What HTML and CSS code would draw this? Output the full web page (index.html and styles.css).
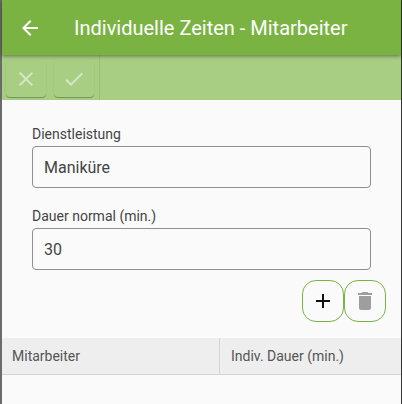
FILE: index.html
```html
<!DOCTYPE html>
<html lang="de">
  <head>
    <meta charset="UTF-8" />
    <title>Individuelle Zeiten - Mitarbeiter</title>
    <link rel="stylesheet" href="styles.css">
  </head>
  <body>
    <main class="screen">
      <header class="appbar">
        <svg class="backIcon" width="24" height="24" viewBox="0 0 24 24">
          <path d="M20 11H7.83l5.59-5.59L12 4l-8 8 8 8 1.41-1.41L7.83 13H20v-2z" />
        </svg>
        <h1>Individuelle Zeiten - Mitarbeiter</h1>
      </header>

      <div class="toolbar">
        <div class="toolGroup">
          <button class="toolButton">
            <svg width="24" height="24" viewBox="0 0 24 24">
              <path d="M19 6.41L17.59 5 12 10.59 6.41 5 5 6.41 10.59 12 5 17.59 6.41 19 12 13.41 17.59 19 19 17.59 13.41 12z" />
            </svg>
          </button>
          <button class="toolButton">
            <svg width="24" height="24" viewBox="0 0 24 24">
              <path d="M9 16.17L4.83 12l-1.42 1.41L9 19 21 7l-1.41-1.41z" />
            </svg>
          </button>
        </div>
      </div>

      <section class="content">
        <form class="form">
          <label class="field">
            <span>Dienstleistung</span>
            <input type="text" value="Maniküre" />
          </label>
          <label class="field">
            <span>Dauer normal (min.)</span>
            <input type="text" value="30" />
          </label>
        </form>

        <div class="actions">
          <button class="roundButton">
            <svg width="24" height="24" viewBox="0 0 24 24">
              <path d="M19 13h-6v6h-2v-6H5v-2h6V5h2v6h6v2z" />
            </svg>
          </button>
          <button class="roundButton disabled">
            <svg width="24" height="24" viewBox="0 0 24 24">
              <path d="M6 19c0 1.1.9 2 2 2h8c1.1 0 2-.9 2-2V7H6v12zM19 4h-3.5l-1-1h-5l-1 1H5v2h14V4z" />
            </svg>
          </button>
        </div>

        <div class="tableHead">
          <div class="cell first">Mitarbeiter</div>
          <div class="cell">Indiv. Dauer (min.)</div>
        </div>
      </section>
    </main>
  </body>
</html>
```

FILE: styles.css
```css
:root {
  --green: #7ab342;
  --lightGreen: #a8ce84;
  --page: #fafafa;
  --text: #444444;
  --line: #d4d4d4;
}
* {
  margin: 0;
  padding: 0;
  box-sizing: border-box;
  font-family: Roboto, "Liberation Sans", sans-serif;
}
html,
body {
  height: 100%;
  overflow: hidden;
}
.screen {
  height: 404px;
  display: flex;
  flex-direction: column;
  background-color: var(--page);
  border-left: 2px solid #6b6b6b;
  border-right: 1px solid #333333;
}

.appbar {
  height: 55px;
  display: flex;
  align-items: center;
  gap: 32px;
  padding-left: 16px;
  background-color: var(--green);
  box-shadow: 0 1px 4px rgba(0, 0, 0, 0.45);
  position: relative;
}
.appbar h1 {
  font-size: 20px;
  font-weight: 400;
  color: #ffffff;
}
.backIcon {
  fill: #ffffff;
}

.toolbar {
  height: 45px;
  display: flex;
  background-color: var(--lightGreen);
}
.toolGroup {
  display: flex;
  gap: 8px;
  padding: 6px 5px 0 4px;
  border-right: 1px solid #98bf75;
}
.toolButton {
  width: 40px;
  height: 36px;
  display: flex;
  align-items: center;
  justify-content: center;
  border: none;
  border-radius: 4px;
  background-color: #a8ce84;
  box-shadow: 0 1px 1px rgba(0, 0, 0, 0.3);
}
.toolButton svg {
  fill: #d5e6c5;
}

.content {
  flex: 1;
  display: flex;
  flex-direction: column;
}
.form {
  display: flex;
  flex-direction: column;
  gap: 20px;
  padding: 26px 30px 0 30px;
}
.field {
  display: flex;
  flex-direction: column;
  gap: 4px;
}
.field span {
  font-size: 14px;
  line-height: 16px;
  color: var(--text);
}
.field input {
  height: 42px;
  padding: 0 11px;
  border: 1px solid #8f8f8f;
  border-radius: 4px;
  outline: none;
  font-size: 16px;
  color: var(--text);
  background-color: transparent;
}

.actions {
  display: flex;
  justify-content: flex-end;
  padding: 10px 15px 0 0;
}
.roundButton {
  width: 42px;
  height: 42px;
  display: flex;
  align-items: center;
  justify-content: center;
  border: 1px solid var(--green);
  border-radius: 14px;
  background-color: transparent;
}
.roundButton svg {
  fill: #111111;
}
.roundButton.disabled svg {
  fill: #9e9e9e;
}

.tableHead {
  display: flex;
  height: 37px;
  margin-top: 16px;
  background-color: #eeeeee;
  border-bottom: 1px solid var(--line);
}
.cell {
  flex: 1;
  display: flex;
  align-items: center;
  padding-left: 11px;
  font-size: 14px;
  color: #555555;
}
.cell.first {
  flex: none;
  width: 218px;
  padding-left: 10px;
  border-right: 1px solid var(--line);
}
```
